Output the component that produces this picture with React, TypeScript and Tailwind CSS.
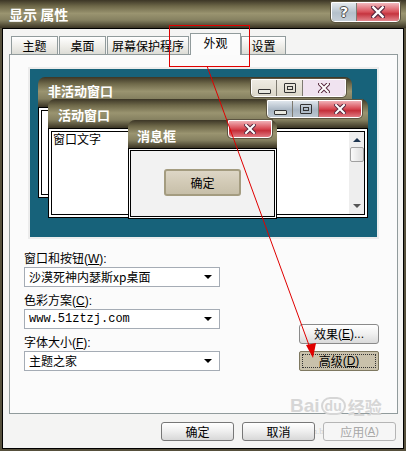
import React from "react";

const cjk = "font-['Noto_Sans_CJK_SC','Noto_Sans',sans-serif]";

const tabs = [
	{ label: "主题", w: "w-[47px]" },
	{ label: "桌面", w: "w-[47px]" },
	{ label: "屏幕保护程序", w: "w-[82px]" },
	{ label: "外观", w: "w-[51px]", active: true },
	{ label: "设置", w: "w-[45px]" },
];

function CloseGlyph({ size = 12 }: { size?: number }) {
	return (
		<svg width={size} height={size - 2} viewBox="0 0 12 10">
			<path d="M2 1 L10 9 M10 1 L2 9" stroke="#5a2a40" strokeWidth="4" strokeLinecap="square" />
			<path d="M2 1 L10 9 M10 1 L2 9" stroke="#fff" strokeWidth="2" strokeLinecap="square" />
		</svg>
	);
}

function MinGlyph() {
	return <div className="mt-[6px] h-[5px] w-[13px] rounded-[1px] border border-[#333] bg-[#e8e8e0]" />;
}

function MaxGlyph() {
	return (
		<div className="flex h-[10px] w-[12px] items-center justify-center rounded-[1px] border border-[#333]">
			<div className="h-[4px] w-[6px] border border-[#333]" />
		</div>
	);
}

function CaptionButtons({ variant }: { variant: "active" | "inactive" }) {
	const side =
		variant === "active"
			? "bg-[linear-gradient(#dfe6ec,#a9b6c3_55%,#bcc7d1)]"
			: "bg-[linear-gradient(#eeebe2,#dcd8ca)]";
	const close =
		variant === "active"
			? "bg-[linear-gradient(#f0b0b6,#d6454f_50%,#c42f3a_60%,#e07a82)]"
			: "bg-[#f0e3f0]";
	return (
		<div className="flex h-[18px] overflow-hidden rounded-b-[4px] border border-white shadow-[0_0_0_1px_#5b5440]">
			<div className={`flex w-[25px] items-center justify-center border-r border-[#7d7a70] ${side}`}>
				<MinGlyph />
			</div>
			<div className={`flex w-[26px] items-center justify-center border-r border-[#7d7a70] ${side}`}>
				<MaxGlyph />
			</div>
			<div className={`flex w-[42px] items-center justify-center ${close}`}>
				<CloseGlyph />
			</div>
		</div>
	);
}

const olive =
	"bg-[linear-gradient(#3c3626,#6e6849_22%,#9a9470_48%,#858060_72%,#3a3424)]";

function Dropdown({ value, mono }: { value: string; mono?: boolean }) {
	return (
		<div className="flex h-[20px] w-[196px] items-center justify-between border border-[#a5acb5] bg-white pl-[4px] pr-[7px]">
			<span
				className={`text-[12px] leading-none text-black ${
					mono ? "font-['Liberation_Mono',monospace] text-[11px]" : cjk
				}`}
			>
				{value}
			</span>
			<span className="h-0 w-0 border-x-[4px] border-t-[4px] border-x-transparent border-t-black" />
		</div>
	);
}

function Field({ label, keyChar, value, mono }: { label: string; keyChar: string; value: string; mono?: boolean }) {
	return (
		<div className="flex flex-col">
			<div className={`h-[15px] text-[12px] leading-[12px] text-black ${cjk}`}>
				{label}
				<span className="font-['Liberation_Sans',sans-serif]">
					(<span className="underline">{keyChar}</span>):
				</span>
			</div>
			<Dropdown value={value} mono={mono} />
		</div>
	);
}

function DialogButton({ children, disabled }: { children: React.ReactNode; disabled?: boolean }) {
	return (
		<div
			className={`relative z-10 flex h-[19px] w-[73px] items-center justify-center rounded-[3px] border text-[12px] leading-none ${cjk} ${
				disabled
					? "border-[#b5b5b5] bg-[#f6f6f6] text-[#a8a8a8]"
					: "border-[#777] bg-[linear-gradient(#ffffff,#f0f0f0_45%,#d8d8d8)] text-black"
			}`}
		>
			{children}
		</div>
	);
}

function Preview() {
	return (
		<div className="relative ml-[18px] h-[172px] w-[351px] border-2 border-[#ececec] bg-[#17627a]">
			{/* inactive window */}
			<div className="absolute left-[8px] top-[8px] flex h-[121px] w-[314px] flex-col">
				<div className={`flex h-[30px] items-start justify-between rounded-t-[7px] pl-[10px] pr-[6px] ${olive}`}>
					<span className={`pt-[7px] text-[13px] font-bold leading-none text-white ${cjk}`}>非活动窗口</span>
					<div className="pt-[2px]">
						<CaptionButtons variant="inactive" />
					</div>
				</div>
				<div className="flex-1 border border-black bg-white p-[2px]">
					<div className="h-full border border-black bg-white" />
				</div>
			</div>
			{/* active window */}
			<div className="absolute left-[18px] top-[30px] flex h-[119px] w-[320px] flex-col">
				<div className={`flex h-[29px] items-start justify-between rounded-t-[7px] pl-[10px] pr-[6px] ${olive}`}>
					<span className={`pt-[9px] text-[13px] font-bold leading-none text-white ${cjk}`}>活动窗口</span>
					<div className="pt-[1px]">
						<CaptionButtons variant="active" />
					</div>
				</div>
				<div className="flex-1 border border-black bg-white p-[2px]">
					<div className="flex h-full border border-black bg-white">
						<span className={`flex-1 pl-[1px] text-[12px] leading-[14px] text-black ${cjk}`}>窗口文字</span>
						<div className="flex w-[15px] flex-col items-center bg-[#eeeeee]">
							<span className="mt-[6px] h-0 w-0 border-x-[4px] border-b-[4px] border-x-transparent border-b-[#1e3550]" />
							<div className="mt-[5px] h-[15px] w-[14px] rounded-[2px] border border-[#a0a0a0] bg-[linear-gradient(90deg,#fafafa,#dcdcdc)]" />
							<span className="mt-auto mb-[6px] h-0 w-0 border-x-[4px] border-t-[4px] border-x-transparent border-t-[#555]" />
						</div>
					</div>
				</div>
			</div>
			{/* message box */}
			<div className="absolute left-[98px] top-[51px] flex h-[99px] w-[149px] flex-col">
				<div className={`flex h-[28px] items-start justify-between rounded-t-[7px] pl-[9px] pr-[5px] ${olive}`}>
					<span className={`pt-[9px] text-[13px] font-bold leading-none text-white ${cjk}`}>消息框</span>
					<div className="flex h-[18px] w-[44px] items-center justify-center rounded-b-[4px] border border-white bg-[linear-gradient(#f0b0b6,#d6454f_50%,#c42f3a_60%,#e07a82)] shadow-[0_0_0_1px_#5b5440]">
						<CloseGlyph />
					</div>
				</div>
				<div className="flex-1 border border-black bg-white p-[1px]">
					<div className="flex h-full items-start justify-center border border-black bg-[#f2f2f2] pt-[18px]">
						<div className="flex h-[27px] w-[77px] items-center justify-center rounded-[3px] border-2 border-[#a49c80] bg-[linear-gradient(#ddd6c6,#d2cab6_50%,#c7bfa9)]">
							<span className={`text-[12px] leading-none text-black ${cjk}`}>确定</span>
						</div>
					</div>
				</div>
			</div>
		</div>
	);
}

export default function App() {
	return (
		<div className="relative h-[451px] w-[406px] overflow-hidden bg-[#56503c]">
			{/* title bar */}
			<div className={`flex h-[28px] items-start justify-between pl-[9px] pr-[6px] ${olive}`}>
				<span className={`pt-[7px] text-[14px] font-bold leading-none text-white ${cjk}`}>显示 属性</span>
				<div className="mt-[2px] flex h-[20px] overflow-hidden rounded-b-[4px] border border-white shadow-[0_0_0_1px_#5b5440]">
					<div className="flex w-[25px] items-center justify-center border-r border-[#7d7a70] bg-[linear-gradient(#e4e9ee,#b4c0cb_55%,#c5ced7)]">
						<span className="font-['DejaVu_Sans',sans-serif] text-[14px] font-bold leading-none text-white [text-shadow:0_0_1px_#333,1px_0_0_#555,-1px_0_0_#555,0_1px_0_#555,0_-1px_0_#555]">
							?
						</span>
					</div>
					<div className="flex w-[42px] items-center justify-center bg-[linear-gradient(#f2b8bd,#d8505a_50%,#c5343f_60%,#e3868d)]">
						<CloseGlyph size={14} />
					</div>
				</div>
			</div>

			{/* dialog body */}
			<div className="relative mx-[2px] h-[421px] border border-black bg-[#f4f4f3] pl-[6px] pr-[4px] pt-[4px]">
				{/* tabs */}
				<div className="flex h-[21px] items-end pl-[2px]">
					{tabs.map((t) =>
						t.active ? (
							<div
								key={t.label}
								className={`relative z-10 -mb-px flex h-[22px] ${t.w} items-start justify-center border border-b-0 border-[#919b9c] bg-[#fcfcfc] pt-[3px] text-[12px] leading-none text-black ${cjk}`}
							>
								{t.label}
							</div>
						) : (
							<div
								key={t.label}
								className={`mr-px flex h-[18px] ${t.w} items-center justify-center border border-b-0 border-[#919b9c] bg-[linear-gradient(#ffffff,#ecebe6_60%,#dcdcd6)] text-[12px] leading-none text-black ${cjk}`}
							>
								{t.label}
							</div>
						),
					)}
				</div>

				{/* tab panel */}
				<div className="h-[360px] w-[389px] border border-[#919b9c] bg-[#fbfbfb] pt-[12px]">
					<Preview />
					<div className="mt-[13px] flex items-end pl-[14px]">
						<div className="flex w-[196px] flex-col gap-[7px]">
							<Field label="窗口和按钮" keyChar="W" value="沙漠死神内瑟斯xp桌面" />
							<Field label="色彩方案" keyChar="C" value="www.51ztzj.com" mono />
							<Field label="字体大小" keyChar="F" value="主题之家" />
						</div>
						<div className="ml-[79px] flex flex-col gap-[7px]">
							<div className={`flex h-[20px] w-[80px] items-center justify-center rounded-[3px] border border-[#8a8a8a] bg-[linear-gradient(#ffffff,#f0f0f0_50%,#dadada)] text-[12px] leading-none text-black ${cjk}`}>
								效果
								<span className="font-['Liberation_Sans',sans-serif]">
									(<span className="underline">E</span>)...
								</span>
							</div>
							<div className="flex h-[20px] w-[80px] items-center justify-center rounded-[2px] border border-[#7e7860] bg-[#c9c1ab] p-[2px]">
								<div className={`flex h-full w-full items-center justify-center border border-dotted border-[#333] text-[12px] leading-none text-black ${cjk}`}>
									高级
									<span className="font-['Liberation_Sans',sans-serif]">
										(<span className="underline">D</span>)
									</span>
								</div>
							</div>
						</div>
					</div>
				</div>

				{/* watermark, sits under the dialog buttons */}
				<div className="pointer-events-none absolute left-[287px] top-[367px] flex items-end text-[#d6d6d6]">
					<span className="font-['Liberation_Sans',sans-serif] text-[19px] font-bold leading-none">Bai</span>
					<span className="ml-[1px] rounded-full border-2 border-[#d6d6d6] px-[2px] font-['Liberation_Sans',sans-serif] text-[14px] font-bold leading-none">
						du
					</span>
					<span className={`ml-[2px] text-[17px] font-bold leading-none ${cjk}`}>经验</span>
				</div>
				<div className="pointer-events-none absolute left-[287px] top-[398px] font-['Liberation_Serif',serif] text-[9px] leading-none text-[#d0d0d0]">
					jingyan.ba
				</div>

				{/* dialog buttons */}
				<div className="mt-[8px] flex justify-end gap-[8px] pr-[3px]">
					<DialogButton>确定</DialogButton>
					<DialogButton>取消</DialogButton>
					<DialogButton disabled>
						应用
						<span className="font-['Liberation_Sans',sans-serif] text-[11px]">
							(<span className="underline">A</span>)
						</span>
					</DialogButton>
				</div>
			</div>

			{/* red annotation */}
			<div className="pointer-events-none absolute left-[169px] top-[25px] h-[42px] w-[81px] border border-[#e00000]" />
			<svg className="pointer-events-none absolute left-0 top-0" width="406" height="451">
				<line x1="207" y1="66" x2="310" y2="348" stroke="#e00000" strokeWidth="1" />
				<polygon points="313,358 306,345 316,343" fill="#e00000" />
			</svg>
		</div>
	);
}
